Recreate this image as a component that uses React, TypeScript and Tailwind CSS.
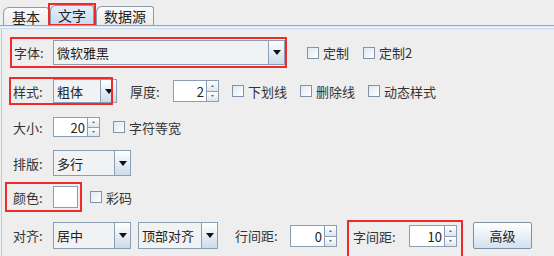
import React from 'react';

const RED = 'border-[#ee2a2a]';

function Arrow() {
  return (
    <div className="w-[16px] h-full border-l border-[#8a9fb4] bg-gradient-to-b from-[#ffffff] to-[#cddbea] flex items-center justify-center">
      <svg width="8" height="5" viewBox="0 0 8 5">
        <path d="M0 0 L8 0 L4 5 Z" fill="#111" />
      </svg>
    </div>
  );
}

function Combo({ value, w, h }: { value: string; w: string; h: string }) {
  return (
    <div className={`${w} ${h} flex border border-[#8a9fb4] bg-[#f1f2f4]`}>
      <div className="flex-1 flex items-center pl-[3px] text-[13px] text-[#222]">{value}</div>
      <Arrow />
    </div>
  );
}

function Spinner({ value, w, h }: { value: string; w: string; h: string }) {
  return (
    <div className={`${w} ${h} flex border border-[#8a9fb4] bg-white`}>
      <div className="flex-1 flex items-center justify-end pr-[2px] text-[13px] text-[#222]">{value}</div>
      <div className="w-[12px] flex flex-col border-l border-[#8a9fb4]">
        <div className="flex-1 flex items-center justify-center border-b border-[#8a9fb4] bg-gradient-to-b from-white to-[#dde6ef]">
          <svg width="3" height="2" viewBox="0 0 3 2"><path d="M0 2 L3 2 L1.5 0 Z" fill="#666" /></svg>
        </div>
        <div className="flex-1 flex items-center justify-center bg-gradient-to-b from-white to-[#dde6ef]">
          <svg width="3" height="2" viewBox="0 0 3 2"><path d="M0 0 L3 0 L1.5 2 Z" fill="#666" /></svg>
        </div>
      </div>
    </div>
  );
}

function Check({ label, ml }: { label: string; ml: string }) {
  return (
    <div className={`${ml} flex items-center`}>
      <div className="w-[12px] h-[12px] border border-[#8093a8] bg-gradient-to-br from-[#dfe8f2] to-[#ffffff]" />
      <span className="ml-[4px] text-[13px] text-[#333]">{label}</span>
    </div>
  );
}

function Tab({ label, selected, w, h }: { label: string; selected?: boolean; w: string; h: string }) {
  return (
    <div
      className={`${w} ${h} flex items-center justify-center border-t border-l border-r border-[#8d9cab] rounded-tr-[3px] rounded-tl-[6px] text-[14px] text-[#222] ${
        selected ? 'bg-gradient-to-b from-[#e3eefa] to-[#c8dcf0]' : 'bg-gradient-to-b from-[#fafafa] to-[#ececec]'
      }`}
    >
      {label}
    </div>
  );
}

export default function App() {
  return (
    <div className="w-[554px] h-[256px] overflow-hidden bg-[#eeeeee] flex flex-col font-['Noto_Sans_CJK_SC','Noto_Sans',sans-serif] leading-none select-none">
      {/* tabs */}
      <div className="h-[25px] flex items-end pl-[3px] shrink-0">
        <Tab label="基本" w="w-[46px]" h="h-[18px]" />
        <div className={`-ml-[1px] border-2 ${RED} -mb-[1px] flex`}>
          <Tab label="文字" selected w="w-[44px]" h="h-[19px]" />
        </div>
        <Tab label="数据源" w="w-[58px]" h="h-[19px]" />
      </div>
      <div className="h-[1px] bg-[#95a8be] shrink-0" />
      <div className="h-[1px] bg-[#dde7f2] shrink-0" />
      <div className="h-[1px] bg-[#f6f9fc] shrink-0" />
      <div className="h-[1px] bg-[#c4d8ee] shrink-0" />

      {/* panel */}
      <div className="flex-1 ml-[1px] border-l border-[#c2ccd6] flex flex-col">
        {/* 字体 */}
        <div className="mt-[8px] flex items-center">
          <div className={`ml-[8px] border-2 ${RED} pl-[2px] py-[1px] flex items-center`}>
            <span className="w-[39px] text-[13px] text-[#333]">字体:</span>
            <Combo value="微软雅黑" w="w-[232px]" h="h-[25px]" />
          </div>
          <Check label="定制" ml="ml-[20px]" />
          <Check label="定制2" ml="ml-[14px]" />
        </div>

        {/* 样式 */}
        <div className="relative mt-[9px] h-[28px] flex items-center">
          <span className="ml-[11px] w-[40px] text-[13px] text-[#333]">样式:</span>
          <Combo value="粗体" w="w-[64px]" h="h-[24px]" />
          <span className="ml-[13px] w-[43px] text-[13px] text-[#333]">厚度:</span>
          <Spinner value="2" w="w-[46px]" h="h-[22px]" />
          <Check label="下划线" ml="ml-[13px]" />
          <Check label="删除线" ml="ml-[13px]" />
          <Check label="动态样式" ml="ml-[13px]" />
          <div className={`absolute left-[7px] top-0 w-[104px] h-[28px] border-2 ${RED} pointer-events-none`} />
        </div>

        {/* 大小 */}
        <div className="mt-[12px] h-[20px] flex items-center">
          <span className="ml-[11px] w-[40px] text-[13px] text-[#333]">大小:</span>
          <Spinner value="20" w="w-[47px]" h="h-[20px]" />
          <Check label="字符等宽" ml="ml-[13px]" />
        </div>

        {/* 排版 */}
        <div className="mt-[13px] h-[26px] flex items-center">
          <span className="ml-[11px] w-[40px] text-[13px] text-[#333]">排版:</span>
          <Combo value="多行" w="w-[78px]" h="h-[26px]" />
        </div>

        {/* 颜色 */}
        <div className="mt-[6px] flex items-center">
          <div className={`ml-[3px] border-2 ${RED} h-[30px] pl-[6px] pr-[2px] flex items-center`}>
            <span className="w-[40px] text-[13px] text-[#333]">颜色:</span>
            <div className="w-[25px] h-[22px] border border-[#8a9fb4] bg-white" />
          </div>
          <Check label="彩码" ml="ml-[8px]" />
        </div>

        {/* 对齐 */}
        <div className="mt-[8px] flex items-start">
          <span className="ml-[11px] mt-[2px] w-[40px] h-[27px] flex items-center text-[13px] text-[#333]">对齐:</span>
          <div className="mt-[2px]">
            <Combo value="居中" w="w-[78px]" h="h-[27px]" />
          </div>
          <div className="mt-[2px] ml-[7px]">
            <Combo value="顶部对齐" w="w-[80px]" h="h-[27px]" />
          </div>
          <span className="ml-[17px] mt-[2px] w-[55px] h-[27px] flex items-center text-[13px] text-[#333]">行间距:</span>
          <div className="mt-[5px]">
            <Spinner value="0" w="w-[47px]" h="h-[22px]" />
          </div>
          <div className={`ml-[10px] border-2 ${RED} h-[40px] pl-[4px] pr-[4px] pt-[3px] flex items-start`}>
            <span className="w-[56px] h-[22px] flex items-center text-[13px] text-[#333]">字间距:</span>
            <Spinner value="10" w="w-[48px]" h="h-[22px]" />
          </div>
          <button className="ml-[10px] mt-[2px] w-[59px] h-[27px] border border-[#7d90a5] rounded-[2px] bg-gradient-to-b from-[#ffffff] to-[#d3e1ef] text-[13px] text-[#222] flex items-center justify-center">
            高级
          </button>
        </div>
      </div>
    </div>
  );
}
